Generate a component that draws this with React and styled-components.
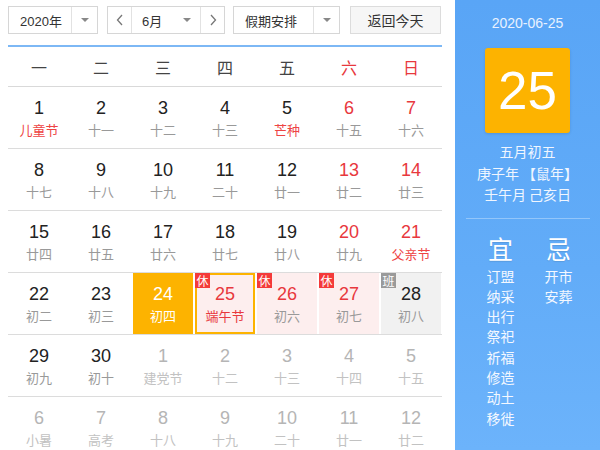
import React from "react";
import styled, { createGlobalStyle, css } from "styled-components";

const Global = createGlobalStyle`
  html, body { margin: 0; padding: 0; background: #fff; overflow: hidden; }
  body { font-family: "Liberation Sans", "Noto Sans CJK SC", sans-serif; }
  * { box-sizing: border-box; }
`;

const Page = styled.div`
  display: flex;
  width: 600px;
  height: 450px;
  overflow: hidden;
`;

const Main = styled.div`
  width: 455px;
  padding: 6px 13px 0 8px;
  display: flex;
  flex-direction: column;
  overflow: hidden;
  & > * { flex-shrink: 0; }
`;

const Toolbar = styled.div`
  display: flex;
  height: 28px;
  margin-bottom: 11px;
`;

const Select = styled.div`
  display: flex;
  align-items: stretch;
  width: ${(p) => p.$w}px;
  margin-right: ${(p) => p.$mr || 0}px;
  height: 28px;
  border: 1px solid #d6d6d6;
  background: #fff;
  font-size: 13px;
  color: #333;
`;

const SelectText = styled.div`
  flex: 1;
  display: flex;
  align-items: center;
  padding-left: 11px;
  font-family: "Liberation Sans", "Noto Sans CJK SC", sans-serif;
`;

const Caret = styled.div`
  width: 26px;
  display: flex;
  align-items: center;
  justify-content: center;
  border-left: 1px solid #e2e2e2;
  &::after {
    content: "";
    border-left: 4px solid transparent;
    border-right: 4px solid transparent;
    border-top: 4px solid #888;
  }
`;

const ArrowCell = styled.div`
  width: 24px;
  display: flex;
  align-items: center;
  justify-content: center;
  ${(p) => (p.$side === "left" ? "border-right" : "border-left")}: 1px solid #e2e2e2;
`;

const MonthBody = styled.div`
  flex: 1;
  display: flex;
  align-items: center;
  padding-left: 10px;
`;

const SmallCaret = styled.span`
  margin-left: auto;
  margin-right: 9px;
  border-left: 4px solid transparent;
  border-right: 4px solid transparent;
  border-top: 4px solid #888;
`;

const Button = styled.div`
  width: 91px;
  height: 28px;
  border: 1px solid #dcdcdc;
  background: #f6f6f6;
  display: flex;
  align-items: center;
  justify-content: center;
  font-size: 14px;
  color: #333;
  font-family: "Noto Sans CJK SC", sans-serif;
`;

const Header = styled.div`
  display: grid;
  grid-template-columns: repeat(7, 62px);
  height: 42px;
  border-top: 2px solid #7db8f5;
  border-bottom: 1px solid #d9d9d9;
`;

const WeekDay = styled.div`
  display: flex;
  align-items: center;
  justify-content: center;
  font-size: 16px;
  font-family: "Noto Sans CJK SC", sans-serif;
  color: ${(p) => (p.$red ? "#e8383d" : "#444")};
`;

const Row = styled.div`
  display: grid;
  grid-template-columns: repeat(7, 62px);
  height: 62px;
  border-bottom: 1px solid #dcdcdc;
`;

const Cell = styled.div`
  position: relative;
  margin: 0 1px;
  display: flex;
  flex-direction: column;
  align-items: center;
  padding-top: 10px;
  background: ${(p) => p.$bg || "transparent"};
  ${(p) =>
    p.$selected &&
    css`
      border: 2px solid #fdb300;
      padding-top: 8px;
    `}
`;

const Num = styled.div`
  font-size: 18px;
  line-height: 22px;
  font-family: "Liberation Sans", Arial, sans-serif;
  color: ${(p) => p.$c};
`;

const Lunar = styled.div`
  font-size: 13px;
  line-height: 18px;
  margin-top: 2px;
  font-family: "Noto Sans CJK SC", sans-serif;
  color: ${(p) => p.$c};
`;

const Badge = styled.div`
  position: absolute;
  left: ${(p) => (p.$sel ? -2 : 0)}px;
  top: ${(p) => (p.$sel ? -2 : 0)}px;
  width: 15px;
  height: 15px;
  display: flex;
  align-items: center;
  justify-content: center;
  font-size: 12px;
  line-height: 15px;
  color: #fff;
  font-family: "Noto Sans CJK SC", sans-serif;
  background: ${(p) => (p.$work ? "#9a9a9a" : "#f43a3a")};
`;

const Side = styled.div`
  width: 145px;
  height: 450px;
  background: linear-gradient(180deg, #59a5f6 0%, #62acf8 60%, #6cb3fb 100%);
  display: flex;
  flex-direction: column;
  align-items: center;
  color: #f2f7ff;
`;

const SideDate = styled.div`
  margin-top: 14px;
  font-size: 14px;
  line-height: 18px;
  color: #e9f2ff;
`;

const DayBox = styled.div`
  margin-top: 16px;
  width: 85px;
  height: 85px;
  background: #fdb300;
  border-radius: 3px;
  box-shadow: 0 1px 3px rgba(0, 0, 0, 0.12);
  display: flex;
  align-items: center;
  justify-content: center;
  font-size: 53px;
  color: #fff;
  font-family: "Liberation Sans", Arial, sans-serif;
`;

const LunarInfo = styled.div`
  margin-top: 8px;
  text-align: center;
  font-size: 14px;
  line-height: 21.5px;
  font-family: "Noto Sans CJK SC", sans-serif;
  color: #f0f6ff;
`;

const Divider = styled.div`
  margin-top: 12px;
  width: 124px;
  height: 1px;
  background: #93c6fa;
`;

const Advice = styled.div`
  display: flex;
  gap: 28px;
  margin-top: 14px;
  margin-left: 4px;
  font-family: "Noto Sans CJK SC", sans-serif;
`;

const AdviceCol = styled.div`
  display: flex;
  flex-direction: column;
  align-items: center;
  width: 30px;
`;

const AdviceTitle = styled.div`
  font-size: 25px;
  line-height: 30px;
  color: #fff;
  margin-bottom: 3px;
  text-shadow: 0 1px 1px rgba(0, 0, 0, 0.1);
`;

const AdviceItem = styled.div`
  font-size: 14px;
  line-height: 20.3px;
  color: #f4f8ff;
  white-space: nowrap;
`;

const weeks = ["一", "二", "三", "四", "五", "六", "日"];

const rows = [
  [["1", "儿童节", "f"], ["2", "十一"], ["3", "十二"], ["4", "十三"], ["5", "芒种", "f"], ["6", "十五"], ["7", "十六"]],
  [["8", "十七"], ["9", "十八"], ["10", "十九"], ["11", "二十"], ["12", "廿一"], ["13", "廿二"], ["14", "廿三"]],
  [["15", "廿四"], ["16", "廿五"], ["17", "廿六"], ["18", "廿七"], ["19", "廿八"], ["20", "廿九"], ["21", "父亲节", "f"]],
  [["22", "初二"], ["23", "初三"], ["24", "初四", "today"], ["25", "端午节", "sel"], ["26", "初六", "rest"], ["27", "初七", "rest"], ["28", "初八", "work"]],
  [["29", "初九"], ["30", "初十"], ["1", "建党节", "o"], ["2", "十二", "o"], ["3", "十三", "o"], ["4", "十四", "o"], ["5", "十五", "o"]],
  [["6", "小暑", "o"], ["7", "高考", "o"], ["8", "十八", "o"], ["9", "十九", "o"], ["10", "二十", "o"], ["11", "廿一", "o"], ["12", "廿二", "o"]],
];

function DayCell({ d, l, t, col }) {
  const weekend = col >= 5;
  let numC = weekend ? "#e8383d" : "#222";
  let lunC = "#999";
  let bg;
  let badge = null;
  if (t === "f") lunC = "#ee4444";
  if (t === "o") {
    numC = "#b5b5b5";
    lunC = "#c2c2c2";
  }
  if (t === "today") {
    bg = "#fdb300";
    numC = "#fff";
    lunC = "#fff";
  }
  if (t === "sel") {
    bg = "#fdeeee";
    numC = "#e8383d";
    lunC = "#e8383d";
    badge = <Badge $sel>休</Badge>;
  }
  if (t === "rest") {
    bg = "#fdeeee";
    numC = "#e8383d";
    badge = <Badge>休</Badge>;
  }
  if (t === "work") {
    bg = "#f1f1f1";
    numC = "#222";
    badge = <Badge $work>班</Badge>;
  }
  return (
    <Cell $bg={bg} $selected={t === "sel"}>
      {badge}
      <Num $c={numC}>{d}</Num>
      <Lunar $c={lunC}>{l}</Lunar>
    </Cell>
  );
}

const ChevronL = () => (
  <svg width="8" height="12" viewBox="0 0 8 12">
    <path d="M6 1 L1.5 6 L6 11" fill="none" stroke="#777" strokeWidth="1.3" />
  </svg>
);
const ChevronR = () => (
  <svg width="8" height="12" viewBox="0 0 8 12">
    <path d="M2 1 L6.5 6 L2 11" fill="none" stroke="#777" strokeWidth="1.3" />
  </svg>
);

export default function App() {
  return (
    <Page>
      <Global />
      <Main>
        <Toolbar>
          <Select $w={90} $mr={9}>
            <SelectText>2020年</SelectText>
            <Caret />
          </Select>
          <Select $w={118} $mr={8}>
            <ArrowCell $side="left">
              <ChevronL />
            </ArrowCell>
            <MonthBody>
              6月
              <SmallCaret />
            </MonthBody>
            <ArrowCell $side="right">
              <ChevronR />
            </ArrowCell>
          </Select>
          <Select $w={107} $mr={10}>
            <SelectText>假期安排</SelectText>
            <Caret />
          </Select>
          <Button>返回今天</Button>
        </Toolbar>
        <Header>
          {weeks.map((w, i) => (
            <WeekDay key={w} $red={i >= 5}>
              {w}
            </WeekDay>
          ))}
        </Header>
        {rows.map((r, ri) => (
          <Row key={ri}>
            {r.map(([d, l, t], ci) => (
              <DayCell key={ci} d={d} l={l} t={t} col={ci} />
            ))}
          </Row>
        ))}
      </Main>
      <Side>
        <SideDate>2020-06-25</SideDate>
        <DayBox>25</DayBox>
        <LunarInfo>
          <div>五月初五</div>
          <div>庚子年 【鼠年】</div>
          <div>壬午月 己亥日</div>
        </LunarInfo>
        <Divider />
        <Advice>
          <AdviceCol>
            <AdviceTitle>宜</AdviceTitle>
            {["订盟", "纳采", "出行", "祭祀", "祈福", "修造", "动土", "移徙"].map((x) => (
              <AdviceItem key={x}>{x}</AdviceItem>
            ))}
          </AdviceCol>
          <AdviceCol>
            <AdviceTitle>忌</AdviceTitle>
            {["开市", "安葬"].map((x) => (
              <AdviceItem key={x}>{x}</AdviceItem>
            ))}
          </AdviceCol>
        </Advice>
      </Side>
    </Page>
  );
}
